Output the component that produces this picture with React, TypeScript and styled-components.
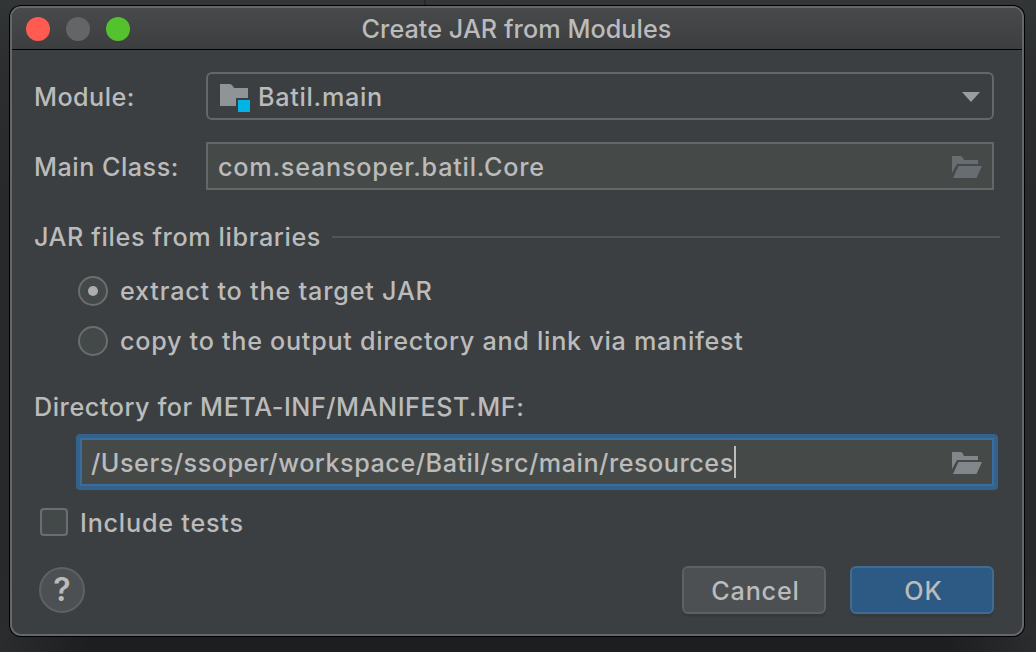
import React from "react";
import styled, { createGlobalStyle } from "styled-components";

const GlobalStyle = createGlobalStyle`
  *, *::before, *::after { box-sizing: border-box; }
  html, body { margin: 0; overflow: hidden; background: #28292b; }
`;

const Desktop = styled.div`
  width: 1036px;
  height: 652px;
  padding: 6px 12px 16px 10px;
  background:
    linear-gradient(to right, transparent 424px, #26292a 424px, #26292a 426px, transparent 426px) top / 100% 6px no-repeat,
    linear-gradient(to right, #2a2c2d, #1d1e20 90px, #1d1e20 946px, #2a2c2d) bottom / 100% 16px no-repeat,
    linear-gradient(to bottom, #323637 0, #2c2e30 60px, #28292b 200px, #28292b 560px, #2a2c2d 640px);
`;

const Dialog = styled.main`
  display: flex;
  flex-direction: column;
  width: 1014px;
  height: 630px;
  border: 2px solid #65676a;
  border-radius: 11px;
  background: #3c3f41;
  box-shadow: 0 0 0 1px #000;
  color: #bbbbbb;
  font-family: Inter, "Liberation Sans", sans-serif;
  font-size: 25.2px;
  font-weight: 450;
  line-height: 32px;
  overflow: hidden;
`;

const TitleBar = styled.header`
  display: grid;
  grid-template-columns: 1fr auto 1fr;
  align-items: center;
  height: 42px;
  flex: none;
  padding: 0 15px 0 14px;
  border-bottom: 1px solid #000;
  background: linear-gradient(#48494b, #3c3e40);
`;

const Lights = styled.div`
  display: flex;
  gap: 16px;
`;

const Light = styled.span<{ $color: string }>`
  width: 24px;
  height: 24px;
  border-radius: 50%;
  background: ${(p) => p.$color};
`;

const Text = styled.span<{ $track: number }>`
  white-space: pre;
  letter-spacing: ${(p) => p.$track}px;
`;

const Content = styled.div`
  display: flex;
  flex-direction: column;
  padding: 22px 22px 0;
`;

const FormRow = styled.div`
  display: grid;
  grid-template-columns: 172px 788px;
  align-items: center;
  height: 48px;
  margin-bottom: 22px;
`;

const RowLabel = styled.label`
  padding-top: 2px;
`;

const Combo = styled.div`
  display: flex;
  align-items: center;
  height: 48px;
  padding: 2px 12px 0;
  border: 2px solid #646667;
  border-radius: 6px;
`;

const Field = styled.div`
  display: flex;
  align-items: center;
  height: 48px;
  padding: 2px 10px 0;
  border: 2px solid #646667;
  background: #454a49;
  svg { margin-left: auto; }
`;

const FocusField = styled(Field)`
  width: 922px;
  height: 56px;
  margin: 11px 0 0 42px;
  padding: 2px 12px 0 11px;
  border: 4px solid #33628c;
  border-radius: 4px;
  box-shadow: inset 0 0 0 2px #3b6c9b;
`;

const Caret = styled.span`
  width: 2px;
  height: 32px;
  margin-top: -2px;
  background: #bbbbbb;
`;

const Section = styled.div`
  display: flex;
  align-items: center;
  height: 32px;
  margin-top: 9px;
`;

const Rule = styled.span`
  height: 2px;
  width: 668px;
  margin-left: auto;
  background: #515354;
`;

const RadioGroup = styled.div`
  display: flex;
  flex-direction: column;
  gap: 18px;
  padding: 22px 0 0 44px;
`;

const Option = styled.label`
  display: flex;
  align-items: center;
  gap: 12px;
  height: 32px;
`;

const Radio = styled.span<{ $on?: boolean }>`
  display: grid;
  place-items: center;
  width: 30px;
  height: 30px;
  border: 2px solid #6b6d6e;
  border-radius: 50%;
  background: #434948;
  &::after {
    content: "";
    width: 10px;
    height: 10px;
    border-radius: 50%;
    background: ${(p) => (p.$on ? "#adadad" : "transparent")};
  }
`;

const DirectoryLabel = styled.div`
  height: 32px;
  margin-top: 34px;
`;

const CheckOption = styled(Option)`
  margin: 16px 0 0 6px;
  ${Text} { padding-top: 2px; }
`;

const Checkbox = styled.span`
  width: 28px;
  height: 28px;
  border: 2px solid #6b6d6e;
  border-radius: 4px;
  background: #434948;
`;

const Footer = styled.footer`
  display: flex;
  align-items: center;
  gap: 24px;
  height: 48px;
  margin: 28px 6px 0 5px;
`;

const Help = styled.button`
  width: 46px;
  height: 46px;
  margin-right: auto;
  padding: 0;
  border: 2px solid #5e6061;
  border-radius: 50%;
  background: #4c5052;
  color: #bbbbbb;
  font: 600 32px/42px Inter, sans-serif;
`;

const Button = styled.button<{ $primary?: boolean }>`
  width: 144px;
  height: 48px;
  padding: 1px 0 0 3px;
  border: 2px solid ${(p) => (p.$primary ? "#406c92" : "#5e6061")};
  border-radius: 6px;
  background: ${(p) => (p.$primary ? "#2d5985" : "#4c5052")};
  box-shadow: 0 3px 1px rgba(0, 0, 0, 0.09);
  color: #bbbbbb;
  font: inherit;
`;

const ModuleGlyph = styled.svg`
  margin: 2px 8px 0 0;
`;

const ArrowGlyph = styled.svg`
  margin-left: auto;
`;

const ModuleIcon = () => (
  <ModuleGlyph width="30" height="28" viewBox="0 0 30 28">
    <path d="M0 0H9.5Q12 0 14 4H28V14H16V22H0Z" fill="#8f9496" />
    <rect x="18" y="16" width="12" height="12" fill="#00b4e6" />
  </ModuleGlyph>
);

const FolderIcon = ({ color }: { color: string }) => (
  <svg width="30" height="22" viewBox="0 0 30 22">
    <path d="M0 0H9Q11 1 12 4H26V8H5L0 17Z" fill={color} />
    <path d="M6.5 10H30L24.5 22H1Z" fill={color} />
  </svg>
);

const Arrow = () => (
  <ArrowGlyph width="18" height="10" viewBox="0 0 18 10">
    <path d="M0 0H18L9 10Z" fill="#9b9d9e" />
  </ArrowGlyph>
);

export default function App() {
  return (
    <>
      <GlobalStyle />
      <Desktop>
        <Dialog>
          <TitleBar>
            <Lights>
              <Light $color="#ff5b51" />
              <Light $color="#646567" />
              <Light $color="#54c22d" />
            </Lights>
            <Text $track={0.06}>Create JAR from Modules</Text>
          </TitleBar>
          <Content>
            <FormRow>
              <RowLabel>
                <Text $track={0.45}>Module:</Text>
              </RowLabel>
              <Combo>
                <ModuleIcon />
                <Text $track={0.7}>Batil.main</Text>
                <Arrow />
              </Combo>
            </FormRow>
            <FormRow>
              <RowLabel>
                <Text $track={0.5}>Main Class:</Text>
              </RowLabel>
              <Field>
                <Text $track={0.77}>com.seansoper.batil.Core</Text>
                <FolderIcon color="#676d70" />
              </Field>
            </FormRow>
            <Section>
              <Text $track={0.61}>JAR files from libraries</Text>
              <Rule />
            </Section>
            <RadioGroup>
              <Option>
                <Radio $on />
                <Text $track={0.8}>extract to the target JAR</Text>
              </Option>
              <Option>
                <Radio />
                <Text $track={0.71}>copy to the output directory and link via manifest</Text>
              </Option>
            </RadioGroup>
            <DirectoryLabel>
              <Text $track={0.54}>Directory for META-INF/MANIFEST.MF:</Text>
            </DirectoryLabel>
            <FocusField>
              <Text $track={0.52}>/Users/ssoper/workspace/Batil/src/main/resources</Text>
              <Caret />
              <FolderIcon color="#81878a" />
            </FocusField>
            <CheckOption>
              <Checkbox />
              <Text $track={0.77}>Include tests</Text>
            </CheckOption>
            <Footer>
              <Help>?</Help>
              <Button>
                <Text $track={0.8}>Cancel</Text>
              </Button>
              <Button $primary>
                <Text $track={0.9}>OK</Text>
              </Button>
            </Footer>
          </Content>
        </Dialog>
      </Desktop>
    </>
  );
}
